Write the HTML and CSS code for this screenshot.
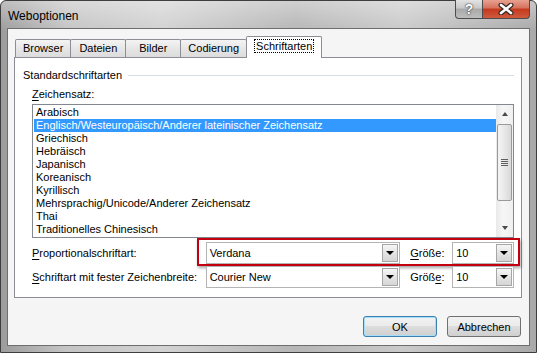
FILE: index.html
```html
<!DOCTYPE html>
<html>

<head>
  <title>Weboptionen</title>
  <link rel="stylesheet" href="styles.css">
</head>

<body>

  <div class="window">
    <div class="titlebar">
      <span class="title">Weboptionen</span>
      <div class="caption-buttons">
        <span class="cap-btn help">?</span>
        <span class="cap-btn close">
          <svg width="16" height="12" viewBox="0 0 16 12">
            <path d="M3 2 L13 10 M13 2 L3 10" stroke="#3a2a26" stroke-width="5" stroke-linecap="round" />
            <path d="M3 2 L13 10 M13 2 L3 10" stroke="#fff" stroke-width="2.6" stroke-linecap="round" />
          </svg>
        </span>
      </div>
    </div>

    <div class="client">
      <div class="tabs">
        <span class="tab">Browser</span>
        <span class="tab">Dateien</span>
        <span class="tab">Bilder</span>
        <span class="tab">Codierung</span>
        <span class="tab active"><span class="focus">Schriftarten</span></span>
      </div>

      <div class="panel">
        <div class="group-title"><span>Standardschriftarten</span></div>

        <div class="group">
          <div class="field-label"><u>Z</u>eichensatz:</div>

          <div class="listbox">
            <ul class="items">
              <li>Arabisch</li>
              <li class="selected">Englisch/Westeuropäisch/Anderer lateinischer Zeichensatz</li>
              <li>Griechisch</li>
              <li>Hebräisch</li>
              <li>Japanisch</li>
              <li>Koreanisch</li>
              <li>Kyrillisch</li>
              <li>Mehrsprachig/Unicode/Anderer Zeichensatz</li>
              <li>Thai</li>
              <li>Traditionelles Chinesisch</li>
            </ul>
            <div class="scrollbar">
              <span class="arrow up"></span>
              <span class="thumb"><span class="grip"></span></span>
              <span class="arrow down"></span>
            </div>
          </div>

          <div class="font-row marked">
            <label class="row-label"><u>P</u>roportionalschriftart:</label>
            <div class="combo wide"><span class="value">Verdana</span><span class="drop"></span></div>
            <label class="size-label"><u>G</u>röße:</label>
            <div class="combo small"><span class="value">10</span><span class="drop"></span></div>
          </div>

          <div class="font-row second">
            <label class="row-label"><u>S</u>chriftart mit fester Zeichenbreite:</label>
            <div class="combo wide"><span class="value">Courier New</span><span class="drop"></span></div>
            <label class="size-label">Größ<u>e</u>:</label>
            <div class="combo small"><span class="value">10</span><span class="drop"></span></div>
          </div>
        </div>
      </div>

      <div class="buttons">
        <button class="btn default">OK</button>
        <button class="btn">Abbrechen</button>
      </div>
    </div>
  </div>

</body>

</html>
```

FILE: styles.css
```css
body {
  margin: 0;
  width: 537px;
  height: 353px;
  overflow: hidden;
  background: #fff;
  font-family: "Liberation Sans", Arial, sans-serif;
  font-size: 11px;
  color: #000;
}

.window {
  width: 537px;
  height: 353px;
  box-sizing: border-box;
  border: 1px solid #3e3e3e;
  border-radius: 6px 6px 0 0;
  padding: 0 6px 6px;
  display: flex;
  flex-direction: column;
  background:
    linear-gradient(180deg, rgba(255, 255, 255, 0.35) 0, rgba(255, 255, 255, 0) 30px),
    linear-gradient(90deg, #9c9c9c 0, #c4c4c4 12%, #d2d2d2 30%, #b6b6b6 55%, #cacaca 75%, #a9a9a9 100%);
}

/* title bar */

.titlebar {
  height: 27px;
  display: flex;
  align-items: flex-start;
}

.title {
  padding: 8px 0 0 1px;
  font-size: 12px;
  line-height: 14px;
}

.caption-buttons {
  margin-left: auto;
  margin-top: -1px;
  display: flex;
}

.cap-btn {
  height: 19px;
  box-sizing: border-box;
  border: 1px solid #4c4c4c;
  border-top: none;
  display: flex;
  align-items: center;
  justify-content: center;
}

.help {
  width: 28px;
  border-radius: 0 0 0 4px;
  background: linear-gradient(#e3e3e3, #c8c8c8 45%, #a9a9a9 50%, #bdbdbd);
  color: #fff;
  font-weight: bold;
  font-size: 14px;
  text-shadow: 0 0 2px #333, 0 0 1px #222;
}

.close {
  width: 48px;
  margin-left: -1px;
  border-radius: 0 0 4px 0;
  background: linear-gradient(#e8a190, #d4715c 45%, #c3391e 50%, #d15a3e);
}

/* client area */

.client {
  flex: 1;
  border: 1px solid #6e6e6e;
  background: #f5f5f5;
  padding: 7px 7px 0 6px;
  display: flex;
  flex-direction: column;
}

.tabs {
  display: flex;
  align-items: flex-end;
  height: 21px;
  padding-left: 1px;
}

.tab {
  min-width: 56px;
  height: 18px;
  box-sizing: border-box;
  padding: 2px 7px 0;
  margin-right: -1px;
  border: 1px solid #8c8e94;
  border-bottom: none;
  border-radius: 2px 2px 0 0;
  background: linear-gradient(#f4f4f4, #e6e6e6 50%, #dcdcdc);
  text-align: center;
  line-height: 13px;
}

.tab.active {
  height: 22px;
  margin-bottom: -1px;
  padding: 3px 8px 0;
  background: #fff;
  position: relative;
  z-index: 1;
}

.focus {
  outline: 1px dotted #000;
  padding: 0 1px;
}

.panel {
  height: 241px;
  box-sizing: border-box;
  border: 1px solid #8c8e94;
  background: #fff;
  padding: 10px 7px 0 8px;
}

.group-title {
  display: flex;
  align-items: center;
  height: 14px;
}

.group-title::after {
  content: "";
  flex: 1;
  margin-left: 6px;
  border-top: 1px solid #d5dfe5;
}

.group {
  padding: 5px 0 0 9px;
}

.field-label {
  line-height: 14px;
  margin-bottom: 3px;
}

u {
  text-underline-offset: 2px;
}

/* listbox */

.listbox {
  height: 134px;
  box-sizing: border-box;
  border: 1px solid #828790;
  display: flex;
}

.items {
  flex: 1;
  list-style: none;
  margin: 0;
  padding: 1px 0 0 1px;
}

.items li {
  height: 13px;
  line-height: 13px;
  padding-left: 2px;
}

.items .selected {
  background: #3399ff;
  color: #fff;
}

.scrollbar {
  width: 17px;
  background: linear-gradient(90deg, #e9e9e9, #f6f6f6 40%, #f0f0f0);
  display: flex;
  flex-direction: column;
  align-items: center;
}

.arrow {
  width: 0;
  height: 0;
  border-left: 3px solid transparent;
  border-right: 3px solid transparent;
}

.arrow.up {
  margin-top: 7px;
  border-bottom: 4px solid #4a4a4a;
}

.arrow.down {
  margin-top: auto;
  margin-bottom: 7px;
  border-top: 4px solid #4a4a4a;
}

.thumb {
  width: 15px;
  height: 77px;
  margin-top: 8px;
  box-sizing: border-box;
  border: 1px solid #9a9a9a;
  border-radius: 2px;
  background: linear-gradient(90deg, #f4f4f4, #e8e8e8 50%, #d8d8d8);
  display: flex;
  align-items: center;
  justify-content: center;
}

.grip {
  width: 7px;
  height: 7px;
  background: repeating-linear-gradient(180deg, #5e5e5e 0, #5e5e5e 1px, transparent 1px, transparent 2px);
}

/* font rows */

.font-row {
  display: flex;
  align-items: center;
  height: 22px;
  margin-top: 4px;
  position: relative;
}

.font-row.second {
  margin-top: 2px;
}

.marked::after {
  content: "";
  position: absolute;
  left: 165px;
  top: -4px;
  width: 323px;
  height: 28px;
  box-sizing: border-box;
  border: 2px solid #c30010;
  box-shadow: 1px 2px 3px rgba(0, 0, 0, 0.35);
}

.row-label {
  width: 174px;
}

.size-label {
  width: 42px;
  margin-left: 10px;
}

.combo {
  height: 22px;
  box-sizing: border-box;
  border: 1px solid #b4b4b4;
  background: #fff;
  display: flex;
  align-items: center;
  padding: 0 1px 0 3px;
}

.combo.wide {
  width: 195px;
}

.combo.small {
  width: 62px;
}

.value {
  flex: 1;
}

.drop {
  width: 16px;
  height: 18px;
  box-sizing: border-box;
  border: 1px solid #a6a6a6;
  background: linear-gradient(#f6f6f6, #e4e4e4 50%, #d6d6d6);
  display: flex;
  align-items: center;
  justify-content: center;
}

.drop::after {
  content: "";
  border-left: 4px solid transparent;
  border-right: 4px solid transparent;
  border-top: 4px solid #000;
}

/* dialog buttons */

.buttons {
  display: flex;
  justify-content: flex-end;
  gap: 10px;
  margin-top: 18px;
  padding-right: 1px;
}

.btn {
  width: 74px;
  height: 21px;
  border: 1px solid #707070;
  border-radius: 3px;
  background: linear-gradient(#f2f2f2, #ebebeb 45%, #dddddd 50%, #cfcfcf);
  font-family: "Liberation Sans", Arial, sans-serif;
  font-size: 11px;
  color: #000;
  padding: 0;
}

.btn.default {
  border-color: #3c7fb1;
  box-shadow: inset 0 0 0 1px #a6e0f8;
}
```
